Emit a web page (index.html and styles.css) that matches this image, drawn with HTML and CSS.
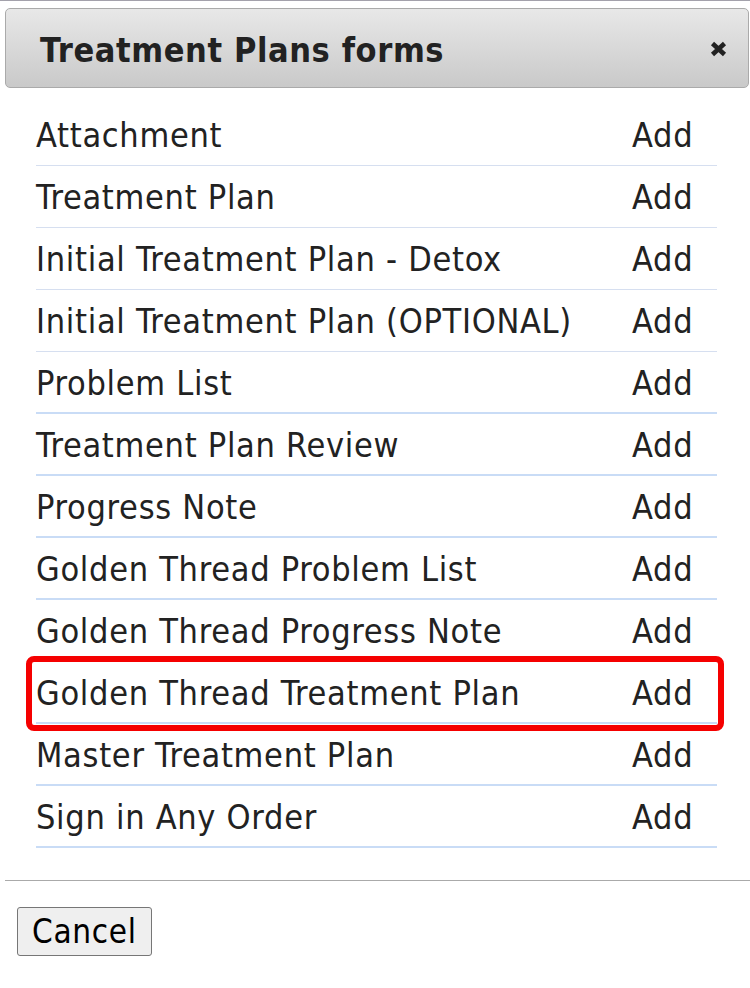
FILE: index.html
```
<!DOCTYPE html>
<html lang="en">
<head>
<meta charset="utf-8">
<title>Treatment Plans forms</title>
<link rel="stylesheet" href="styles.css">
</head>
<body>
<div class="dialog">
  <div class="titlebar">
    <span class="title">Treatment Plans forms</span>
    <span class="close" aria-label="close">
      <svg width="17" height="16" viewBox="0 0 17 16"><path d="M2.5 2.5 L14.5 13.5 M14.5 2.5 L2.5 13.5" stroke="#222" stroke-width="4.6" stroke-linecap="butt" fill="none"/></svg>
    </span>
  </div>
  <div class="list">
    <div class="row light"><span class="name">Attachment</span><span class="add">Add</span></div>
    <div class="row light"><span class="name">Treatment Plan</span><span class="add">Add</span></div>
    <div class="row light"><span class="name">Initial Treatment Plan - Detox</span><span class="add">Add</span></div>
    <div class="row light"><span class="name">Initial Treatment Plan (OPTIONAL)</span><span class="add">Add</span></div>
    <div class="row"><span class="name">Problem List</span><span class="add">Add</span></div>
    <div class="row"><span class="name">Treatment Plan Review</span><span class="add">Add</span></div>
    <div class="row"><span class="name">Progress Note</span><span class="add">Add</span></div>
    <div class="row"><span class="name">Golden Thread Problem List</span><span class="add">Add</span></div>
    <div class="row"><span class="name">Golden Thread Progress Note</span><span class="add">Add</span></div>
    <div class="row highlighted"><span class="name">Golden Thread Treatment Plan</span><span class="add">Add</span><span class="mark"></span></div>
    <div class="row"><span class="name">Master Treatment Plan</span><span class="add">Add</span></div>
    <div class="row"><span class="name">Sign in Any Order</span><span class="add">Add</span></div>
  </div>
  <div class="footer">
    <button class="cancel" type="button">Cancel</button>
  </div>
</div>
</body>
</html>
```
FILE: styles.css
```
html, body {
  margin: 0;
  padding: 0;
  background: #fff;
}
body {
  border-top: 1px solid #a3a1ab;
  font-family: "DejaVu Sans Condensed", "DejaVu Sans", sans-serif;
  color: #222;
}
.titlebar {
  margin: 7px 1px 0 5px;
  height: 78px;
  border: 1px solid #aaa;
  border-radius: 5px;
  background: linear-gradient(#e8e8e8, #c9c9c9);
  display: flex;
  align-items: center;
  justify-content: space-between;
  padding: 0 21px 0 34px;
}
.title {
  font-weight: bold;
  font-size: 34px;
  letter-spacing: 0.6px;
  padding-top: 4px;
}
.close {
  display: flex;
  width: 17px;
  height: 16px;
  margin-top: 2px;
}
.list {
  margin: 16px 33px 0 36px;
}
.row {
  position: relative;
  display: flex;
  box-sizing: border-box;
  height: 62px;
  padding-top: 2px;
  line-height: 58px;
  font-size: 34px;
  letter-spacing: 0.7px;
  border-bottom: 2px solid #c9dcf6;
}
.row.light {
  line-height: 59px;
  border-bottom: 1px solid #d6dff0;
}
.name {
  flex: 1;
  white-space: nowrap;
}
.add {
  width: 85px;
  white-space: nowrap;
}
.mark {
  position: absolute;
  left: -10px;
  top: -6px;
  width: 686px;
  height: 63px;
  border: 6px solid #f50000;
  border-radius: 8px;
  pointer-events: none;
}
.footer {
  margin: 32px 0 0 5px;
  border-top: 1px solid #aaa;
  padding: 26px 0 0 12px;
}
.cancel {
  font-family: "DejaVu Sans Condensed", "DejaVu Sans", sans-serif;
  font-size: 33px;
  letter-spacing: 0.7px;
  color: #000;
  height: 49px;
  padding: 0 14px;
  background: #efefef;
  border: 1px solid #767676;
  border-radius: 3px;
}
```
